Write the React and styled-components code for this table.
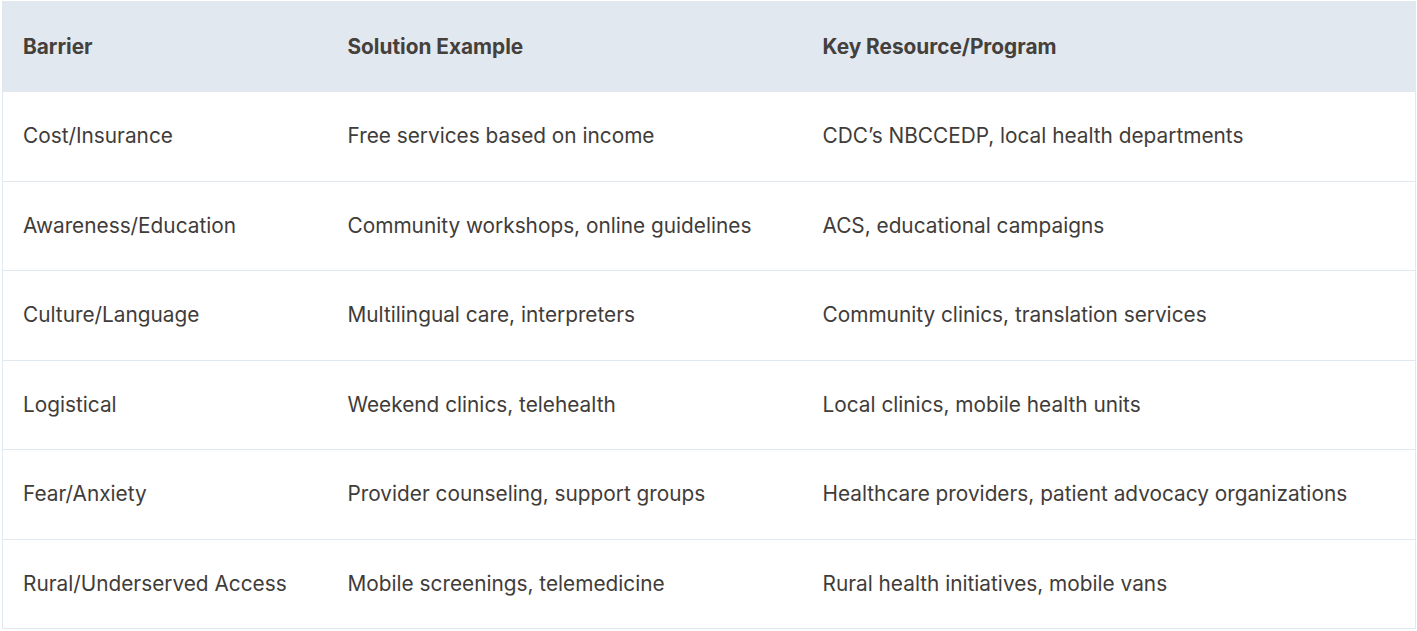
import React from 'react';
import styled, { createGlobalStyle } from 'styled-components';

const GlobalStyle = createGlobalStyle`
  html, body {
    margin: 0;
    padding: 0;
    background: #ffffff;
    font-family: Inter, "Noto Sans", Arial, sans-serif;
  }
`;

const rows = [
  ['Cost/Insurance', 'Free services based on income', 'CDC\u2019s NBCCEDP, local health departments'],
  ['Awareness/Education', 'Community workshops, online guidelines', 'ACS, educational campaigns'],
  ['Culture/Language', 'Multilingual care, interpreters', 'Community clinics, translation services'],
  ['Logistical', 'Weekend clinics, telehealth', 'Local clinics, mobile health units'],
  ['Fear/Anxiety', 'Provider counseling, support groups', 'Healthcare providers, patient advocacy organizations'],
  ['Rural/Underserved Access', 'Mobile screenings, telemedicine', 'Rural health initiatives, mobile vans'],
];

function App() {
  return (
    <Wrapper>
      <GlobalStyle />
      <Table>
        <colgroup>
          <col style={{ width: 325 }} />
          <col style={{ width: 475 }} />
          <col />
        </colgroup>
        <thead>
          <tr>
            <HeadCell>Barrier</HeadCell>
            <HeadCell>Solution Example</HeadCell>
            <HeadCell>Key Resource/Program</HeadCell>
          </tr>
        </thead>
        <tbody>
          {rows.map((r) => (
            <Row key={r[0]}>
              {r.map((c) => (
                <Cell key={c}>{c}</Cell>
              ))}
            </Row>
          ))}
        </tbody>
      </Table>
    </Wrapper>
  );
}

const Wrapper = styled.div`
  padding: 1px 1px 0 2px;
`;

const Table = styled.table`
  width: 100%;
  border-collapse: collapse;
  table-layout: fixed;
  border: 1px solid #e2e8f0;
  color: #3f3c39;
  font-size: 20.8px;
`;

const HeadCell = styled.th`
  background: #e2e8f0;
  text-align: left;
  font-weight: 700;
  color: #44403c;
  line-height: 32px;
  padding: 29px 20px 28px;
`;

const Row = styled.tr`
  border-top: 1px solid #e2e8f0;
`;

const Cell = styled.td`
  padding: 28px 20px;
  line-height: 32.5px;
  vertical-align: middle;
`;

export default App;
